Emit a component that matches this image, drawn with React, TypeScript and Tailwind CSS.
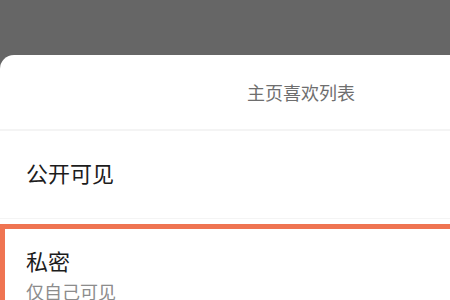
export default function App() {
  return (
    <div
      className="w-[450px] h-[300px] overflow-hidden bg-[#666666] flex flex-col"
      style={{ fontFamily: '"Noto Sans CJK SC", "Noto Sans", sans-serif' }}
    >
      <div className="h-[55px] shrink-0" />
      <div className="flex-1 bg-white rounded-tl-[14px] flex flex-col">
        <div className="h-[74px] shrink-0 flex items-center justify-end pr-[95px]">
          <span className="text-[18px] leading-[24px] text-[#6e6e6e]">主页喜欢列表</span>
        </div>
        <div className="h-[2px] bg-[#f4f4f4] shrink-0" />
        <div className="h-[87px] shrink-0 flex items-center pl-[26px] pb-[6px]">
          <span className="text-[22px] leading-[30px] text-[#1c1c1c]">公开可见</span>
        </div>
        <div className="h-[1px] bg-[#f4f4f4] shrink-0" />
        <div className="mt-[5px] flex-1 border-[5px] border-b-0 border-r-0 border-[#ef7452] pl-[21px] pt-[16px]">
          <div className="text-[22px] leading-[30px] text-[#1c1c1c]">私密</div>
          <div className="mt-[3px] text-[18px] leading-[26px] text-[#8c8c8c]">仅自己可见</div>
        </div>
      </div>
    </div>
  );
}
